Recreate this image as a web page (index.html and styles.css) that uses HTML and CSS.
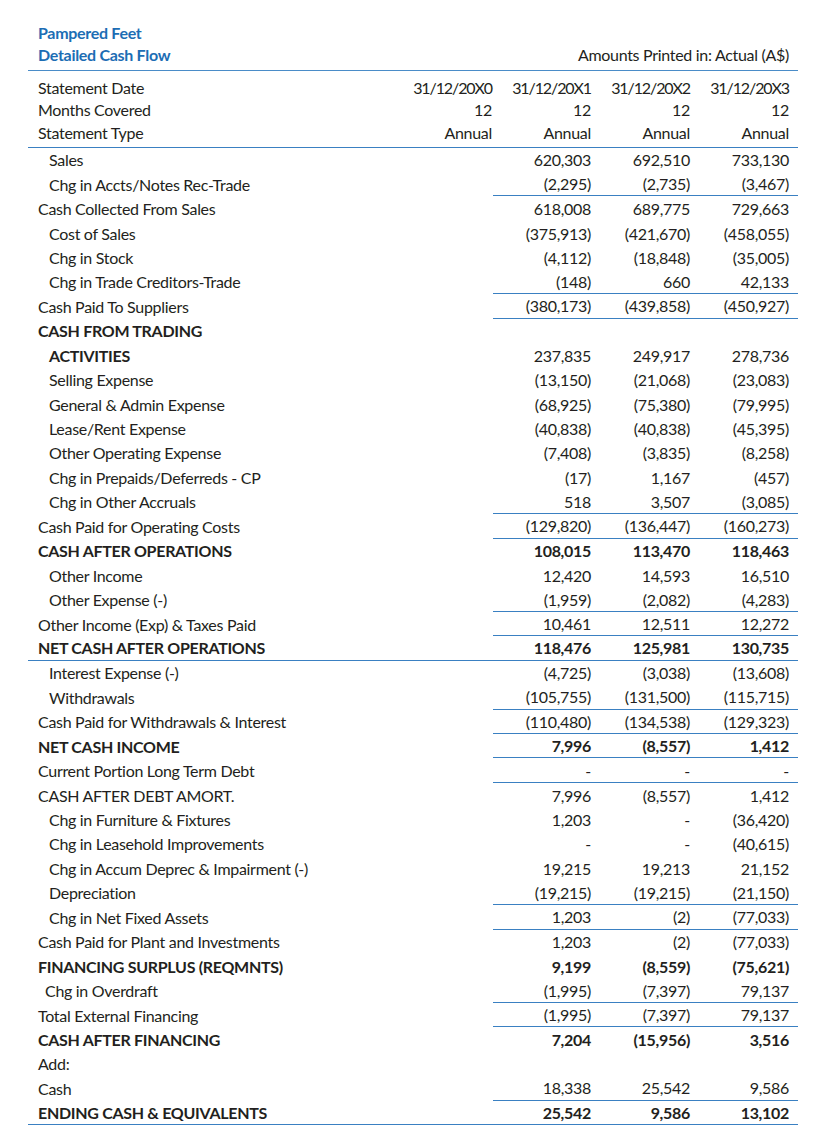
FILE: index.html
```html
<!DOCTYPE html>
<html>
<head>
<meta charset="utf-8">
<link rel="stylesheet" href="styles.css">
</head>
<body>
<div class="page">
  <div class="titles">
    <div class="t1">Pampered Feet</div>
    <div class="t2row"><span class="t2">Detailed Cash Flow</span><span class="amounts">Amounts Printed in: Actual (A$)</span></div>
  </div>
  <div class="head">
    <div class="hrow dates"><span class="lab">Statement Date</span><span>31/12/20X0</span><span>31/12/20X1</span><span>31/12/20X2</span><span>31/12/20X3</span></div>
    <div class="hrow"><span class="lab">Months Covered</span><span>12</span><span>12</span><span>12</span><span>12</span></div>
    <div class="hrow"><span class="lab">Statement Type</span><span>Annual</span><span>Annual</span><span>Annual</span><span>Annual</span></div>
  </div>
  <div class="body">
    <div class="row in"><span class="lab">Sales</span><span></span><span>620,303</span><span>692,510</span><span>733,130</span></div>
    <div class="row in u"><span class="lab">Chg in Accts/Notes Rec-Trade</span><span></span><span>(2,295)</span><span>(2,735)</span><span>(3,467)</span></div>
    <div class="row"><span class="lab">Cash Collected From Sales</span><span></span><span>618,008</span><span>689,775</span><span>729,663</span></div>
    <div class="row in"><span class="lab">Cost of Sales</span><span></span><span>(375,913)</span><span>(421,670)</span><span>(458,055)</span></div>
    <div class="row in"><span class="lab">Chg in Stock</span><span></span><span>(4,112)</span><span>(18,848)</span><span>(35,005)</span></div>
    <div class="row in u"><span class="lab">Chg in Trade Creditors-Trade</span><span></span><span>(148)</span><span>660</span><span>42,133</span></div>
    <div class="row u"><span class="lab">Cash Paid To Suppliers</span><span></span><span>(380,173)</span><span>(439,858)</span><span>(450,927)</span></div>
    <div class="row b"><span class="lab">CASH FROM TRADING</span><span></span><span></span><span></span><span></span></div>
    <div class="row b in nb"><span class="lab">ACTIVITIES</span><span></span><span>237,835</span><span>249,917</span><span>278,736</span></div>
    <div class="row in"><span class="lab">Selling Expense</span><span></span><span>(13,150)</span><span>(21,068)</span><span>(23,083)</span></div>
    <div class="row in"><span class="lab">General &amp; Admin Expense</span><span></span><span>(68,925)</span><span>(75,380)</span><span>(79,995)</span></div>
    <div class="row in"><span class="lab">Lease/Rent Expense</span><span></span><span>(40,838)</span><span>(40,838)</span><span>(45,395)</span></div>
    <div class="row in"><span class="lab">Other Operating Expense</span><span></span><span>(7,408)</span><span>(3,835)</span><span>(8,258)</span></div>
    <div class="row in"><span class="lab">Chg in Prepaids/Deferreds - CP</span><span></span><span>(17)</span><span>1,167</span><span>(457)</span></div>
    <div class="row in u"><span class="lab">Chg in Other Accruals</span><span></span><span>518</span><span>3,507</span><span>(3,085)</span></div>
    <div class="row u"><span class="lab">Cash Paid for Operating Costs</span><span></span><span>(129,820)</span><span>(136,447)</span><span>(160,273)</span></div>
    <div class="row b"><span class="lab">CASH AFTER OPERATIONS</span><span></span><span>108,015</span><span>113,470</span><span>118,463</span></div>
    <div class="row in"><span class="lab">Other Income</span><span></span><span>12,420</span><span>14,593</span><span>16,510</span></div>
    <div class="row in u"><span class="lab">Other Expense (-)</span><span></span><span>(1,959)</span><span>(2,082)</span><span>(4,283)</span></div>
    <div class="row u"><span class="lab">Other Income (Exp) &amp; Taxes Paid</span><span></span><span>10,461</span><span>12,511</span><span>12,272</span></div>
    <div class="row b full"><span class="lab">NET CASH AFTER OPERATIONS</span><span></span><span>118,476</span><span>125,981</span><span>130,735</span></div>
    <div class="row in"><span class="lab">Interest Expense (-)</span><span></span><span>(4,725)</span><span>(3,038)</span><span>(13,608)</span></div>
    <div class="row in u"><span class="lab">Withdrawals</span><span></span><span>(105,755)</span><span>(131,500)</span><span>(115,715)</span></div>
    <div class="row u"><span class="lab">Cash Paid for Withdrawals &amp; Interest</span><span></span><span>(110,480)</span><span>(134,538)</span><span>(129,323)</span></div>
    <div class="row b u"><span class="lab">NET CASH INCOME</span><span></span><span>7,996</span><span>(8,557)</span><span>1,412</span></div>
    <div class="row u"><span class="lab">Current Portion Long Term Debt</span><span></span><span>-</span><span>-</span><span>-</span></div>
    <div class="row"><span class="lab">CASH AFTER DEBT AMORT.</span><span></span><span>7,996</span><span>(8,557)</span><span>1,412</span></div>
    <div class="row in"><span class="lab">Chg in Furniture &amp; Fixtures</span><span></span><span>1,203</span><span>-</span><span>(36,420)</span></div>
    <div class="row in"><span class="lab">Chg in Leasehold Improvements</span><span></span><span>-</span><span>-</span><span>(40,615)</span></div>
    <div class="row in"><span class="lab">Chg in Accum Deprec &amp; Impairment (-)</span><span></span><span>19,215</span><span>19,213</span><span>21,152</span></div>
    <div class="row in u"><span class="lab">Depreciation</span><span></span><span>(19,215)</span><span>(19,215)</span><span>(21,150)</span></div>
    <div class="row in u"><span class="lab">Chg in Net Fixed Assets</span><span></span><span>1,203</span><span>(2)</span><span>(77,033)</span></div>
    <div class="row"><span class="lab">Cash Paid for Plant and Investments</span><span></span><span>1,203</span><span>(2)</span><span>(77,033)</span></div>
    <div class="row b"><span class="lab">FINANCING SURPLUS (REQMNTS)</span><span></span><span>9,199</span><span>(8,559)</span><span>(75,621)</span></div>
    <div class="row in2 u"><span class="lab">Chg in Overdraft</span><span></span><span>(1,995)</span><span>(7,397)</span><span>79,137</span></div>
    <div class="row u"><span class="lab">Total External Financing</span><span></span><span>(1,995)</span><span>(7,397)</span><span>79,137</span></div>
    <div class="row b"><span class="lab">CASH AFTER FINANCING</span><span></span><span>7,204</span><span>(15,956)</span><span>3,516</span></div>
    <div class="row"><span class="lab">Add:</span><span></span><span></span><span></span><span></span></div>
    <div class="row u"><span class="lab">Cash</span><span></span><span>18,338</span><span>25,542</span><span>9,586</span></div>
    <div class="row b full"><span class="lab">ENDING CASH &amp; EQUIVALENTS</span><span></span><span>25,542</span><span>9,586</span><span>13,102</span></div>
  </div>
</div>
</body>
</html>
```

FILE: styles.css
```css
html, body {
  margin: 0;
  padding: 0;
  background: #ffffff;
}
body {
  font-family: "Lato", "Liberation Sans", sans-serif;
  font-size: 16px;
  letter-spacing: -0.3px;
  color: #231f20;
}
.page {
  width: 770px;
  margin-left: 28px;
  padding-top: 22px;
}
.titles {
  padding-left: 10px;
  padding-right: 9px;
  padding-bottom: 4px;
  border-bottom: 1px solid #4a8cc8;
}
.t1, .t2 {
  color: #1c6db4;
  font-weight: 700;
  line-height: 22px;
}
.t2row {
  display: flex;
  justify-content: space-between;
  line-height: 22px;
}
.head {
  padding-top: 5px;
  padding-bottom: 3px;
  border-bottom: 1px solid #3a80c2;
}
.hrow, .row {
  display: grid;
  grid-template-columns: 1fr 99px 107px 99px 99px;
  align-items: center;
}
.hrow {
  height: 22.5px;
}
.row {
  height: 24.45px;
  box-sizing: border-box;
}
.hrow > span, .row > span {
  text-align: right;
  padding-right: 9px;
  white-space: nowrap;
  box-sizing: border-box;
  height: 100%;
  display: flex;
  align-items: center;
  justify-content: flex-end;
}
.hrow > span:nth-child(2), .row > span:nth-child(2) {
  padding-right: 1px;
}
.hrow.dates > span:not(.lab) {
  letter-spacing: -1.1px;
}
.hrow > .lab, .row > .lab {
  justify-content: flex-start;
  padding-left: 10px;
  padding-right: 0;
}
.row.in > .lab {
  padding-left: 21px;
}
.row.in2 > .lab {
  padding-left: 17px;
}
.row.b {
  font-weight: 700;
}
.row.b.nb > span:not(.lab) {
  font-weight: 400;
}
.row.u > span:nth-child(n+3) {
  border-bottom: 1px solid #3a80c2;
}
.row.full > span {
  border-bottom: 1px solid #3a80c2;
}
```
